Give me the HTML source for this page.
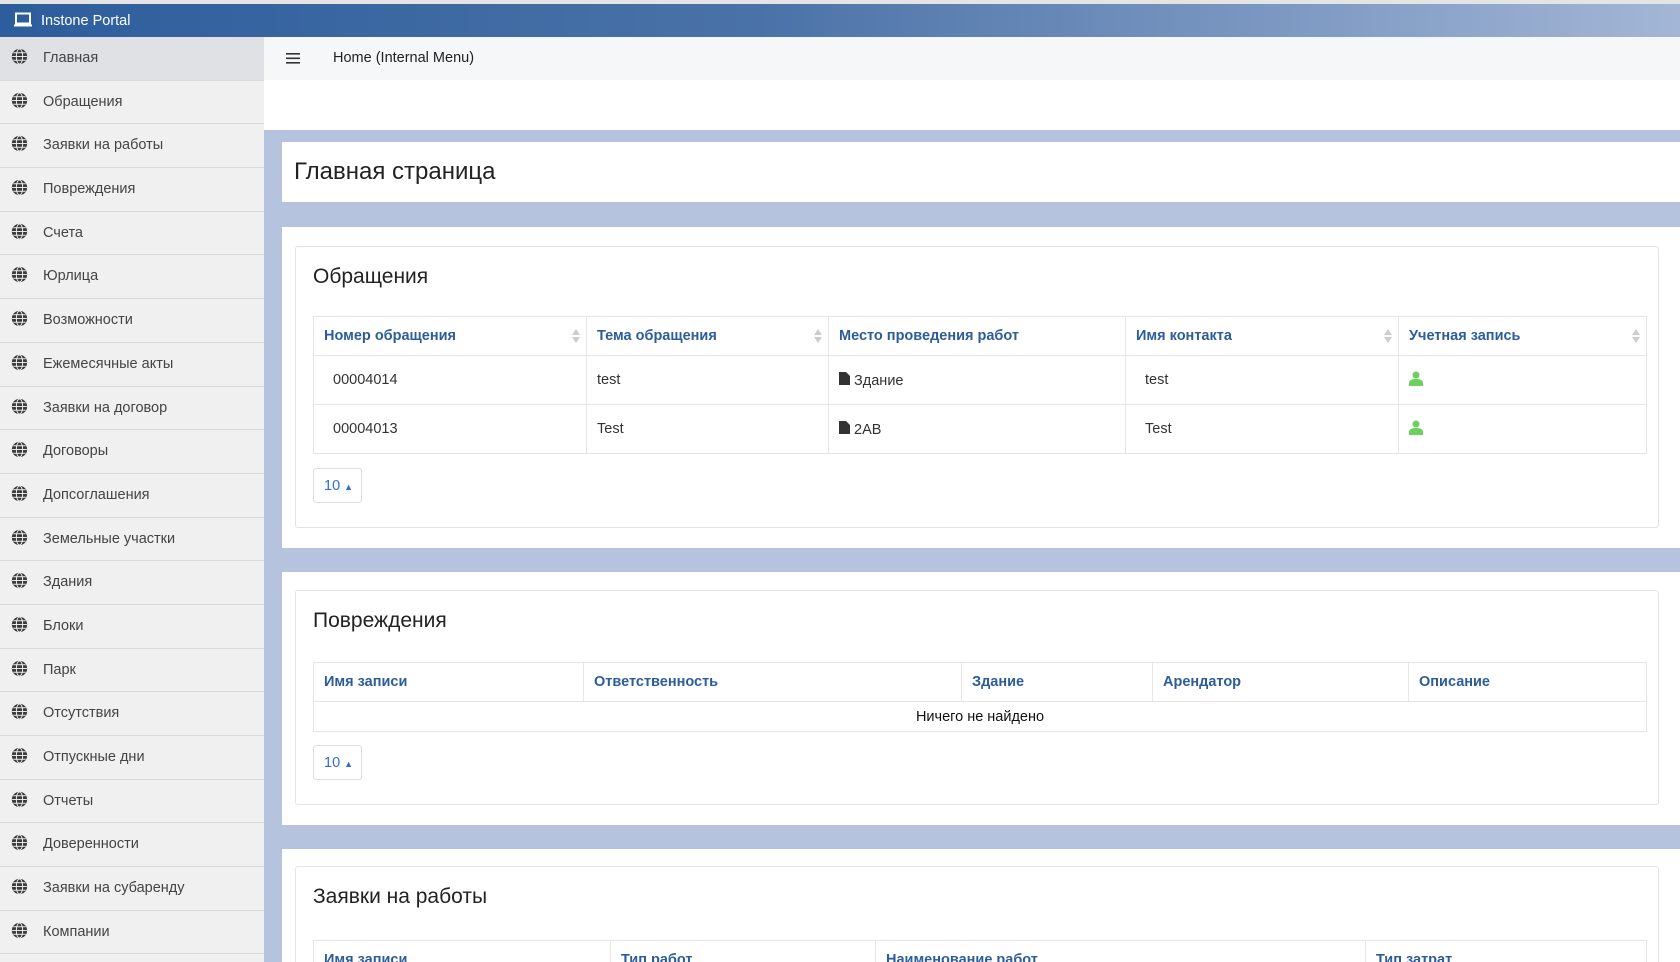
<!DOCTYPE html>
<html style="overflow:hidden;height:962px"><head><meta charset="utf-8"><style>
*{box-sizing:border-box;margin:0;padding:0}
body{width:1680px;height:962px;overflow:hidden;font-family:"Liberation Sans",Arial,sans-serif;background:#fff;position:relative;color:#333}
.top{position:absolute;left:0;top:0;width:1680px;height:37px;background:linear-gradient(90deg,#2c5d9c 0%,#4a72a8 45%,#a3b6d6 100%);border-top:4px solid #e4e4e4;color:#fff;font-size:14.5px}
.top span{position:absolute;left:41px;top:9px}
.side{position:absolute;left:0;top:37px;width:264px;height:925px;background:#f0f0f0;overflow:hidden}
.it{height:43.7px;border-bottom:1.5px solid #d9d9d9;position:relative;font-size:14.5px;color:#444}
.it.a{background:#dfe1e5}
.it span{position:absolute;left:43px;top:13px}
.it svg{position:absolute;left:11px;top:11px}
.nav{position:absolute;left:264px;top:37px;width:1416px;height:43px;background:#f6f7f9;font-size:14.5px;color:#222}
.main{position:absolute;left:264px;top:130px;width:1416px;height:832px;background:#b5c3df;overflow:hidden}
.card{position:absolute;left:18px;width:1398px;background:#fff}
.in{position:absolute;left:13px;right:21px;border:1px solid #e3e3e3;border-radius:3px}
h2{position:absolute;left:17px;font-weight:normal;font-size:21px;color:#222}
table{position:absolute;left:17px;width:1334px;border-collapse:collapse;font-size:14.5px}
th{color:#2d5c9a;text-align:left;font-weight:bold;padding:0 10px;height:39px;border:1px solid #e6e6e6;position:relative}
td{border:1px solid #e6e6e6;padding:0 10px}
.so{position:absolute;right:6px;top:12px;width:8px;height:14px}
.btn{position:absolute;left:17px;width:49px;height:35px;border:1px solid #ddd;border-radius:3px;color:#2d6fd0;font-size:14.5px;padding:9px 0 0 10px}
</style></head><body>
<div class="top"><svg style="position:absolute;left:14px;top:8px" width="18" height="16" viewBox="0 0 18 16"><rect x="2" y="1.5" width="14" height="10" fill="none" stroke="#fff" stroke-width="2"/><rect x="0" y="12.5" width="18" height="2" fill="#fff"/></svg><span>Instone Portal</span></div>
<div class="side">
<script>
var n=["Главная","Обращения","Заявки на работы","Повреждения","Счета","Юрлица","Возможности","Ежемесячные акты","Заявки на договор","Договоры","Допсоглашения","Земельные участки","Здания","Блоки","Парк","Отсутствия","Отпускные дни","Отчеты","Доверенности","Заявки на субаренду","Компании"];
var g='<svg width="17" height="17" viewBox="0 0 16 16"><circle cx="8" cy="8" r="7.2" fill="#3a3a3a"/><g stroke="#f0f0f0" stroke-width="0.9" fill="none"><ellipse cx="8" cy="8" rx="3" ry="7"/><line x1="1" y1="8" x2="15" y2="8"/><path d="M2.2 4.5h11.6M2.2 11.5h11.6"/></g></svg>';
for(var i=0;i<n.length;i++)document.write('<div class="it'+(i==0?' a':'')+'">'+g+'<span>'+n[i]+'</span></div>');
</script>
</div>
<div class="nav"><svg style="position:absolute;left:22px;top:16px" width="14" height="11"><rect y="0" width="14" height="1.6" fill="#333"/><rect y="4.5" width="14" height="1.6" fill="#333"/><rect y="9" width="14" height="1.6" fill="#333"/></svg><span style="position:absolute;left:69px;top:13px">Home (Internal Menu)</span></div>
<div class="main">
<div class="card" style="top:12px;height:60px;"><span style="position:absolute;left:12px;top:16px;font-size:24px;color:#222">Главная страница</span></div>
<div class="card" style="top:97px;height:321px">
<div class="in" style="top:19px;height:282px">
<h2 style="top:18px">Обращения</h2>
<table style="top:69px">
<tr><th style="width:273px">Номер обращения<svg class="so" viewBox="0 0 8 14"><path d="M4 0L8 6H0z M4 14L0 8h8z" fill="#ccc"/></svg></th><th style="width:242px">Тема обращения<svg class="so" viewBox="0 0 8 14"><path d="M4 0L8 6H0z M4 14L0 8h8z" fill="#ccc"/></svg></th><th style="width:297px">Место проведения работ</th><th style="width:273px">Имя контакта<svg class="so" viewBox="0 0 8 14"><path d="M4 0L8 6H0z M4 14L0 8h8z" fill="#ccc"/></svg></th><th>Учетная запись<svg class="so" viewBox="0 0 8 14"><path d="M4 0L8 6H0z M4 14L0 8h8z" fill="#ccc"/></svg></th></tr>
<tr style="height:49px"><td style="padding-left:19px">00004014</td><td>test</td><td><svg width="11" height="13" viewBox="0 0 11 13"><path d="M0 0h7l4 4v9H0z" fill="#333"/></svg> Здание</td><td style="padding-left:19px">test</td><td><svg width="14" height="15" viewBox="0 0 14 15"><circle cx="7" cy="4" r="3.5" fill="#6cd15c"/><path d="M0 15v-3q0-4 7-4t7 4v3z" fill="#6cd15c"/></svg></td></tr>
<tr style="height:49px"><td style="padding-left:19px">00004013</td><td>Test</td><td><svg width="11" height="13" viewBox="0 0 11 13"><path d="M0 0h7l4 4v9H0z" fill="#333"/></svg> 2AB</td><td style="padding-left:19px">Test</td><td><svg width="14" height="15" viewBox="0 0 14 15"><circle cx="7" cy="4" r="3.5" fill="#6cd15c"/><path d="M0 15v-3q0-4 7-4t7 4v3z" fill="#6cd15c"/></svg></td></tr>
</table>
<div class="btn" style="top:221px">10 <span style="font-size:9px">▲</span></div>
</div></div>
<div class="card" style="top:442px;height:253px">
<div class="in" style="top:18px;height:215px">
<h2 style="top:18px">Повреждения</h2>
<table style="top:71px">
<tr><th style="width:270px">Имя записи</th><th style="width:378px">Ответственность</th><th style="width:191px">Здание</th><th style="width:256px">Арендатор</th><th>Описание</th></tr>
<tr style="height:30px"><td colspan="5" style="text-align:center;color:#111">Ничего не найдено</td></tr>
</table>
<div class="btn" style="top:154px">10 <span style="font-size:9px">▲</span></div>
</div></div>
<div class="card" style="top:719px;height:200px">
<div class="in" style="top:17px;height:200px">
<h2 style="top:18px">Заявки на работы</h2>
<table style="top:73px">
<tr><th style="width:297px">Имя записи</th><th style="width:265px">Тип работ</th><th style="width:490px">Наименование работ</th><th>Тип затрат</th></tr>
</table>
</div></div>
</div>
</body></html>
